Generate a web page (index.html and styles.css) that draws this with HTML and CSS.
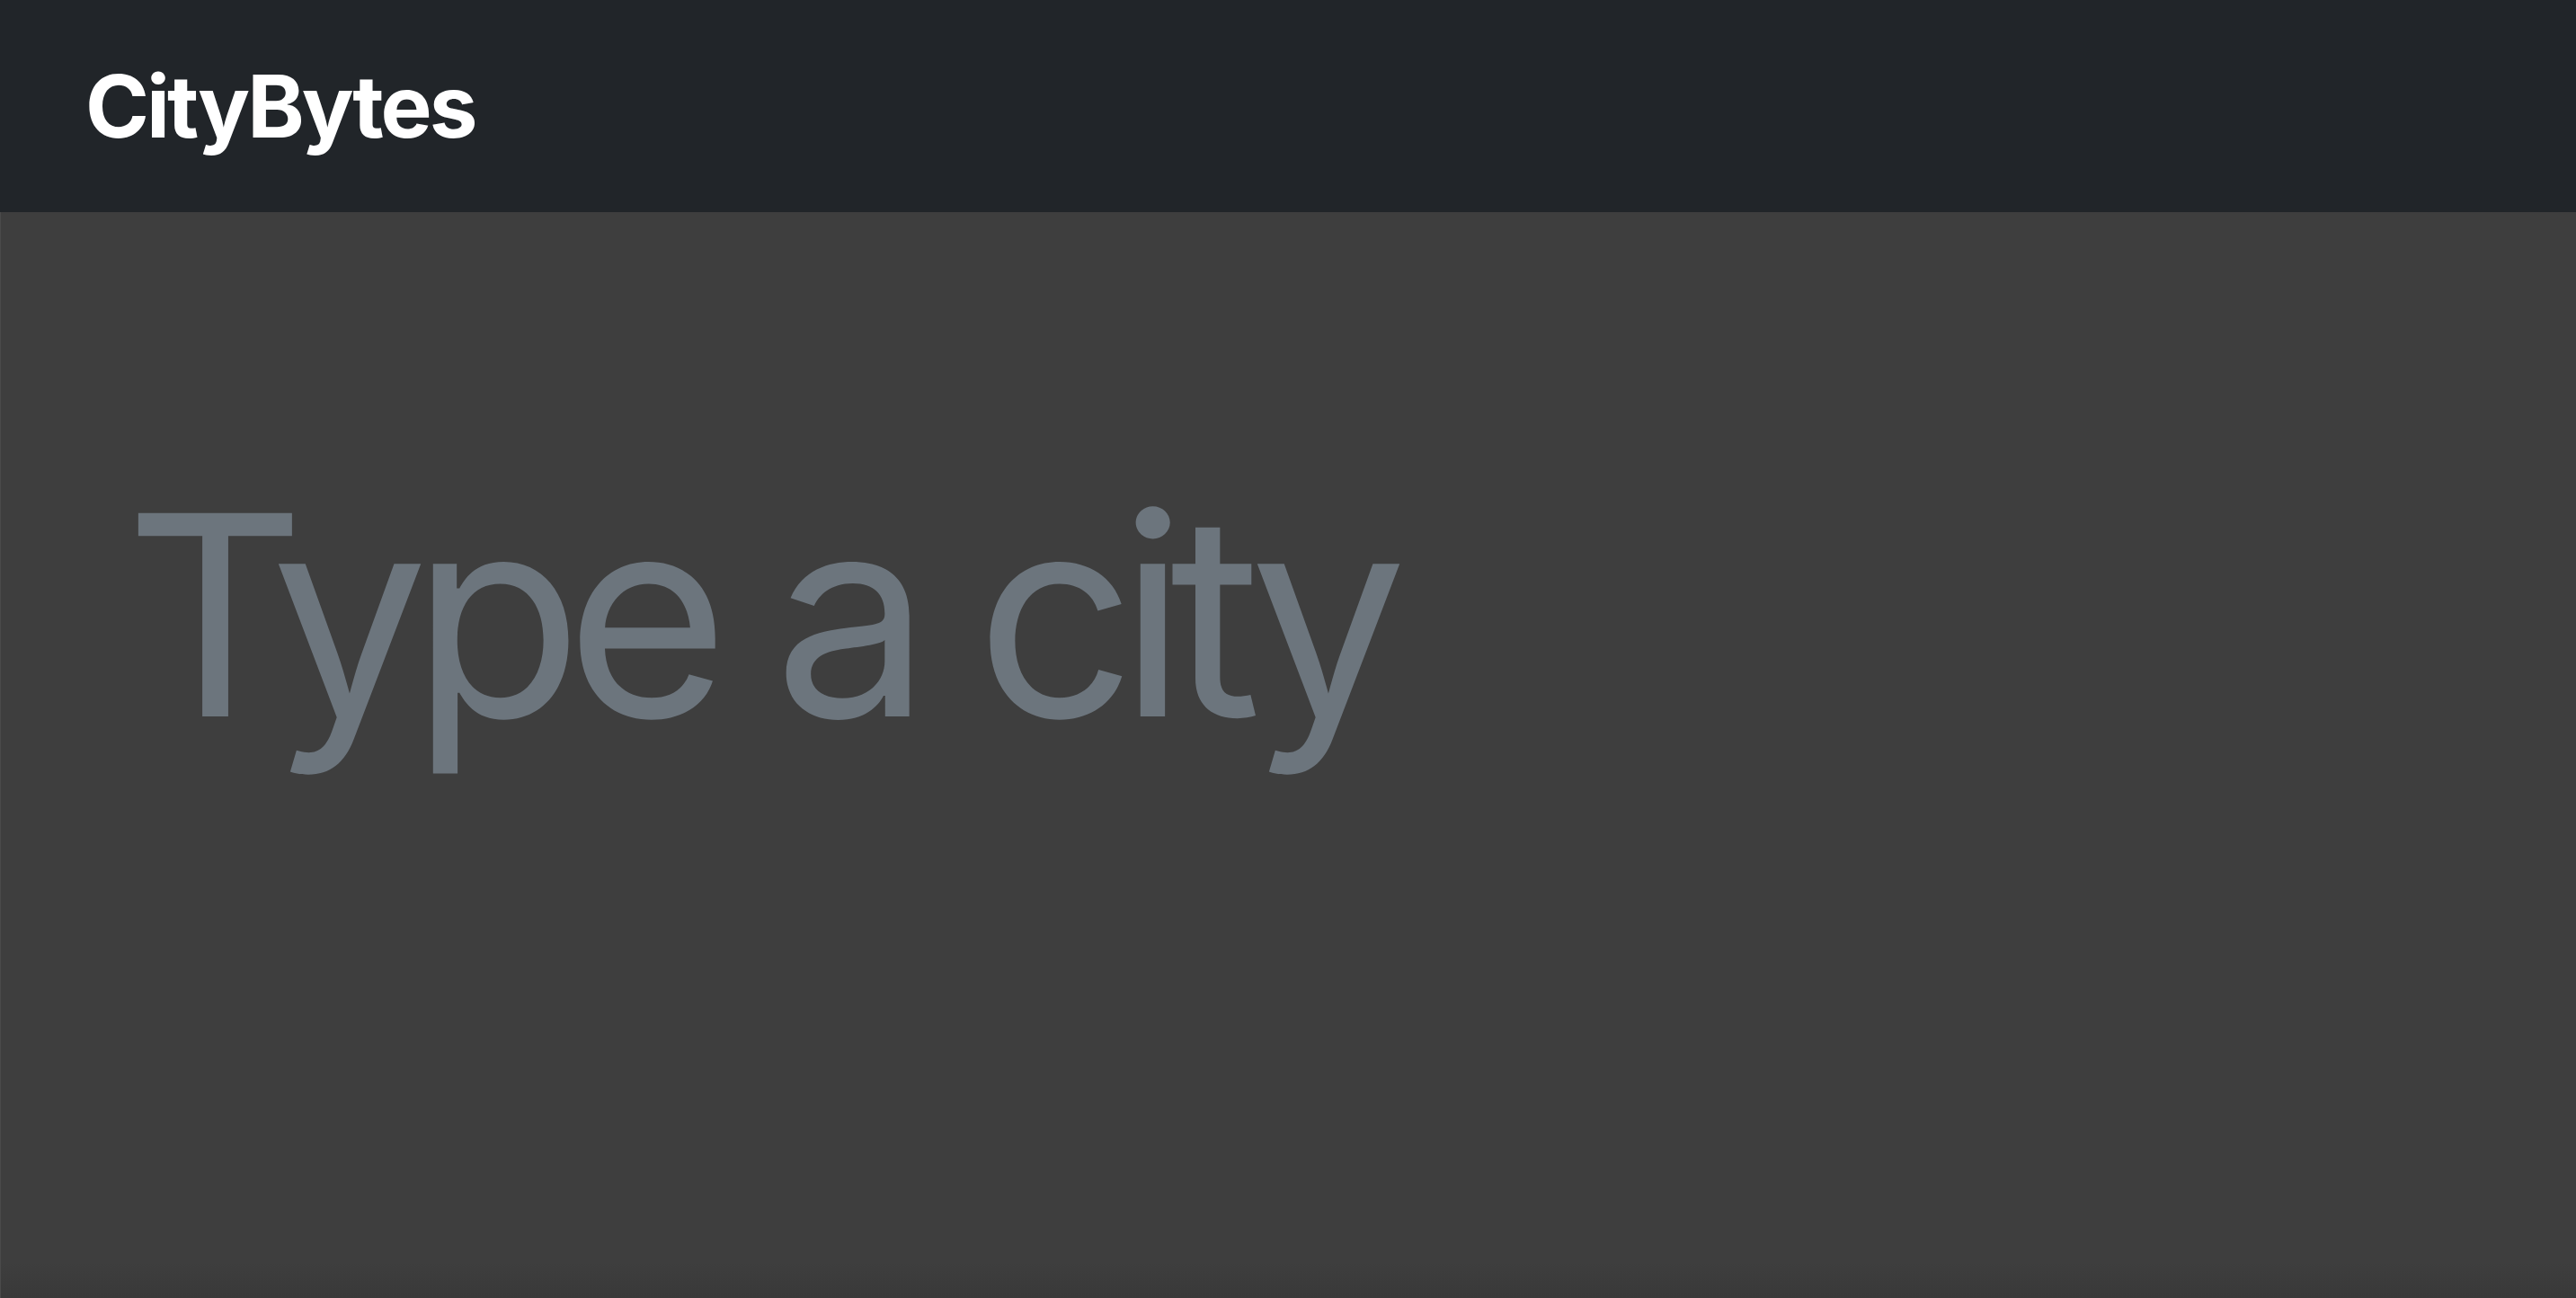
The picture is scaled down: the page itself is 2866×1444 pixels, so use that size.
FILE: index.html
```html
<!DOCTYPE html>
<html lang="en">
<head>
<meta charset="utf-8">
<title>CityBytes</title>
<link rel="stylesheet" href="styles.css">
</head>
<body>
<header class="navbar">
  <a class="brand" href="#">CityBytes</a>
</header>
<main class="content">
  <input class="city-input" type="text" placeholder="Type a city" aria-label="City">
</main>
</body>
</html>
```

FILE: styles.css
```css
html, body {
  margin: 0;
  padding: 0;
  height: 100%;
}
body {
  background: #3e3e3e;
  font-family: Inter, "Noto Sans", sans-serif;
  display: flex;
  flex-direction: column;
}
.navbar {
  height: 236px;
  flex: 0 0 236px;
  background: #212529;
  display: flex;
  align-items: center;
  padding: 0 0 0 95px;
  box-sizing: border-box;
}
.brand {
  color: #ffffff;
  text-decoration: none;
  font-weight: 700;
  font-size: 96px;
  line-height: 1.21;
  letter-spacing: -3px;
}
.content {
  flex: 1;
  padding: 262px 0 0 138px;
  border-left: 1px solid #4a4a4a;
  background: linear-gradient(to bottom, #3e3e3e 0, #3e3e3e calc(100% - 40px), #393939 100%);
}
.city-input {
  display: block;
  width: 2400px;
  border: 0;
  outline: none;
  background: transparent;
  padding: 0;
  margin: 0;
  font-family: Inter, "Noto Sans", sans-serif;
  font-size: 311px;
  line-height: 1.2;
  height: 373px;
  letter-spacing: -0.06em;
  color: #ffffff;
}
.city-input::placeholder {
  color: #6c757d;
  opacity: 1;
}
```
